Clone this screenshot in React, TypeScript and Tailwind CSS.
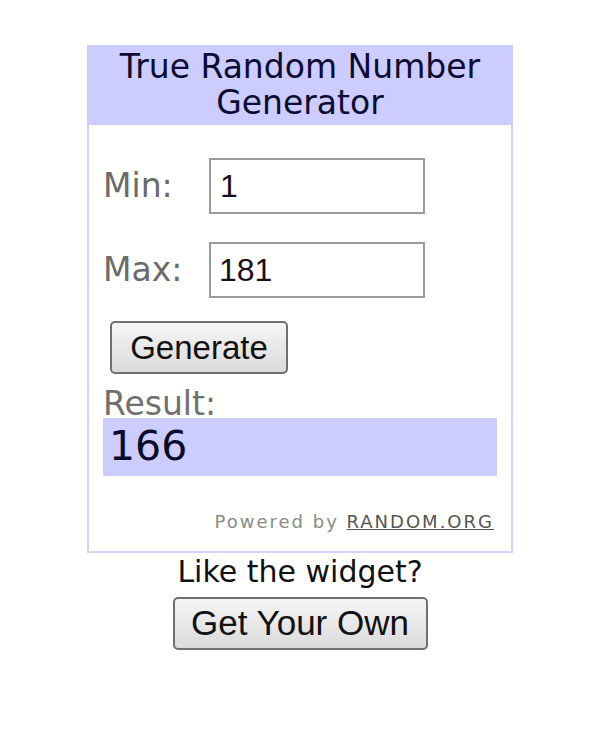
import React from "react";

export default function App() {
  return (
    <div className="w-[600px] h-[744px] bg-white pt-[45px] flex flex-col items-center font-['DejaVu_Sans',Verdana,sans-serif]">
      <div className="w-[426px] border-2 border-t-0 border-[#d4d4fa] bg-[#fffffd] flex flex-col">
        <div className="bg-[#ccccff] h-[80px] -mx-[2px] flex flex-col items-center justify-center text-[33px] leading-[36px] text-[#0b0b33]">
          <div>True Random Number</div>
          <div>Generator</div>
        </div>
        <div className="px-[14px] pt-[33px] pb-[16px] flex flex-col">
          <div className="flex items-center">
            <span className="w-[106px] text-[33px] leading-[40px] text-[#6b6b6b]">Min:</span>
            <div className="w-[216px] h-[56px] border-2 border-[#9a9a9a] bg-white flex items-center pl-[9px] text-[32px] text-[#1a0f1a] font-['Liberation_Sans',Arial,sans-serif]">
              1
            </div>
          </div>
          <div className="flex items-center mt-[28px]">
            <span className="w-[106px] text-[33px] leading-[40px] text-[#6b6b6b]">Max:</span>
            <div className="w-[216px] h-[56px] border-2 border-[#9a9a9a] bg-white flex items-center pl-[8px] text-[32px] text-[#1a0f1a] font-['Liberation_Sans',Arial,sans-serif]">
              181
            </div>
          </div>
          <div className="mt-[23px] ml-[7px]">
            <div className="w-[178px] h-[53px] rounded-[5px] border-2 border-[#707070] bg-gradient-to-b from-[#f6f6f6] to-[#dadada] flex items-center justify-center text-[33px] text-[#111] font-['Liberation_Sans',Arial,sans-serif]">
              Generate
            </div>
          </div>
          <div className="mt-[15px] text-[33px] leading-[30px] text-[#707070]">Result:</div>
          <div className="-mt-[1px] h-[58px] w-[394px] bg-[#ccccff] flex items-center pl-[6px] text-[41px] text-[#0a0a2a]">
            166
          </div>
          <div className="mt-[32px] text-right pr-[3px] text-[18px] tracking-[2px] text-[#8a8a8a]">
            Powered by <span className="underline text-[#555]">RANDOM.ORG</span>
          </div>
        </div>
      </div>
      <div className="text-[30px] leading-[38px] text-[#111]">Like the widget?</div>
      <div className="mt-[6px] w-[255px] h-[53px] rounded-[5px] border-2 border-[#707070] bg-gradient-to-b from-[#f6f6f6] to-[#dadada] flex items-center justify-center text-[35px] text-[#111] font-['Liberation_Sans',Arial,sans-serif]">
        Get Your Own
      </div>
    </div>
  );
}
